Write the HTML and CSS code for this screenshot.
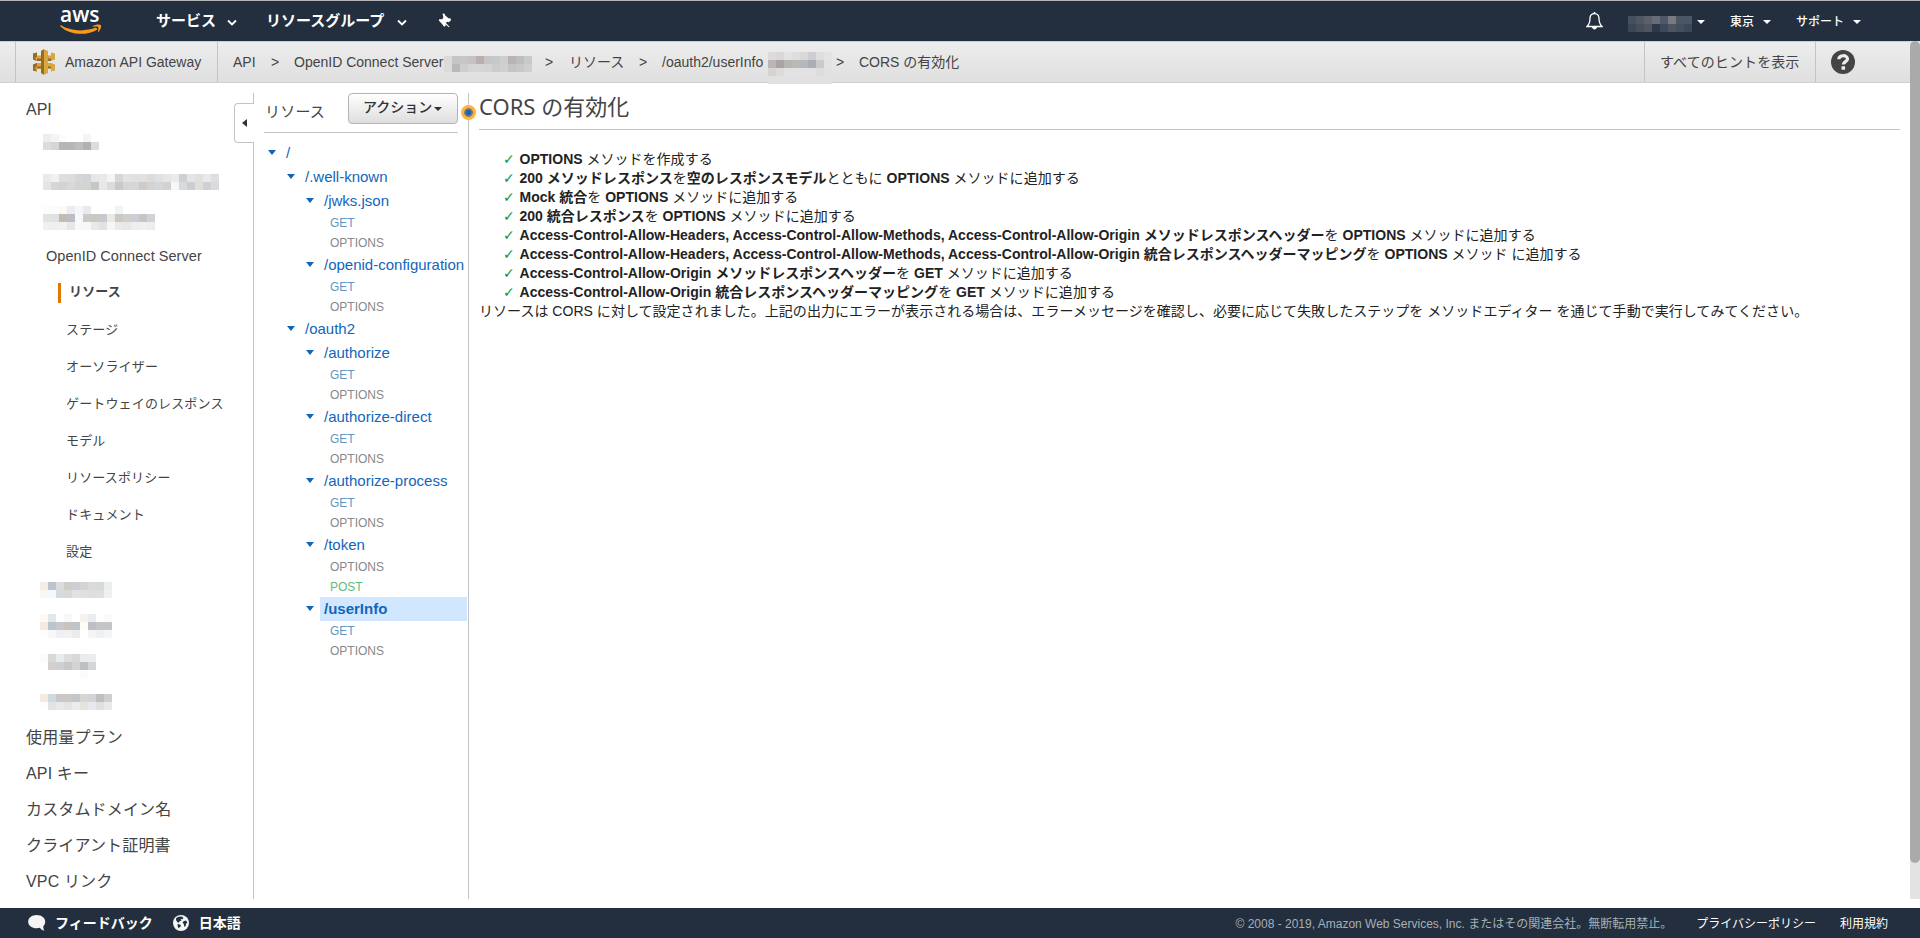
FILE: index.html
```html
<!DOCTYPE html>
<html lang="ja">
<head>
<meta charset="utf-8">
<title>API Gateway</title>
<link rel="stylesheet" href="styles.css">
</head>
<body>
<header class="nav">
  <div class="logo"><span class="logo-text">aws</span>
    <svg class="swoosh" width="42" height="11" viewBox="0 0 42 11"><path d="M.5 1C11 7.500 25 7.800 36 3.600L37.500 5.400C27 12 10 11.500.2 2.200z" fill="#f7981f"/><path d="M32.500 2.300C35 .2 39.500 0 40.800.9C41.800 2 40.500 5.800 38.300 8.200C37.500 8 38.900 4.200 38.300 3.200C37.700 2.400 35 2.600 32.500 2.700z" fill="#f7981f"/></svg>
  </div>
  <span class="menu services">サービス</span><svg class="chev" width="10" height="7" viewBox="0 0 10 7"><path d="M1 1.500L5 5.500L9 1.500" fill="none" stroke="#fff" stroke-width="1.800"/></svg>
  <span class="menu groups">リソースグループ</span><svg class="chev" width="10" height="7" viewBox="0 0 10 7"><path d="M1 1.500L5 5.500L9 1.500" fill="none" stroke="#fff" stroke-width="1.800"/></svg>
  <svg class="pin" width="14" height="15" viewBox="0 0 14 15"><path d="M4.500.8L6.300.6L7.300 2.500L10.500 5.200L12.700 5.500L13 7.200L10.800 9.200L9.200 8.800L7.300 10.300L7.600 13L6.200 13.800L3.600 10.500L.8 7.500L1.200 6.200L4.300 6.200L5.400 4.200zM7.500 9.500L11.500 13.800L10.800 14.300L6.500 10.500z" fill="#fff"/></svg>
  <div class="nav-right">
    <svg class="bell" width="17" height="18" viewBox="0 0 17 18"><path d="M8.500 1.600C5.500 1.600 4 3.800 4 6.500C4 10.500 3 12.500 1 14.500H16C14 12.500 13 10.500 13 6.500C13 3.800 11.500 1.600 8.500 1.600z" fill="none" stroke="#fff" stroke-width="1.300"/><path d="M6.500 15A2 2 0 0 0 10.500 15z" fill="#fff" stroke="#fff"/><path d="M8.500 0V2" stroke="#fff" stroke-width="1.500"/></svg>
    <div class="mosaic user" data-cells="454f60 4e5864 5d6066 666c7a 4d586b 777b80 4b5663 495665/3b4759 454f5b 4c5560 2d384b 3d4858 4b565e 434f5c 3c4757"></div>
    <i class="tri c1"></i><span class="small">東京</span><i class="tri c2"></i><span class="small">サポート</span><i class="tri c3"></i>
  </div>
</header>
<div class="crumbs">
  <div class="service">
    <svg class="gw" width="22" height="26" viewBox="0 0 22 26"><path d="M0 4.500L4 3.500V6.500H8V2L11 .3L15 2V6.500H18V3.500L22 4.500V10.500L18 12H15V14H18L22 15.500V21.500L18 22.500V19.500H15V24L11 25.800L8 24V19.500H4V22.500L0 21.500V15.500L4 14H8V12H4L0 10.500z" fill="#d9a741"/><path d="M8 2L11 .3V25.800L8 24zM0 4.500L4 3.500V7.500L2 9.500L4 12L0 10.500zM0 15.500L4 14V17L2 19L4 22.500L0 21.500zM4 9.500H8V12H4zM15 9.500H18V12H15zM4 17.500H8V19.500H4zM15 17.500H18V19.500H15z" fill="#946b27"/></svg>
    <span>Amazon API Gateway</span>
  </div>
  <div class="path">
    <span class="p-api">API</span><span class="gt g1">&gt;</span><span class="p-server">OpenID Connect Server</span>
    <div class="mosaic m-server" data-cells="dadada c5c5c5 c7c6c4 c4c3c3 b8afae c7c6c4 c5c9cc d0ceca b9b3b4 bdbdbe c7cacd/dcdcdc b9b9b9 cecece d5d5d5 d5d5d3 d3d5d5 cacdd0 d0d0d0 c5c3c4 c8c8c8 cdcfd1"></div>
    <span class="gt g2">&gt;</span><span class="p-res">リソース</span><span class="gt g3">&gt;</span><span class="p-info">/oauth2/userInfo</span>
    <div class="mosaic m-info" data-cells="dbdbdb d8d8d8 e1e2e2 dddddd dbd9d7 cdced1 dddee0 e3e3e3/b9b6b6 aaa2a3 b5b5b5 bdb8b1 b6b9bb abafb5 c9cacc e2e2e2/d5d4d2 dbdddb e2e2e2 e2e2e2 e2e2e2 e2e2e2 dddddf e1e1e1/e1e1e1 e1e1e1 e1e1e1 e1e1e1 e1e1e1 e1e1e1 e1e1e1 e1e1e1"></div>
    <span class="gt g4">&gt;</span><span class="p-cors">CORS の有効化</span>
  </div>
  <div class="hints">すべてのヒントを表示</div>
  <div class="help"><svg width="24" height="24" viewBox="0 0 24 24"><circle cx="12" cy="12" r="12" fill="#444"/><path d="M7.800 9.200C7.800 4.600 16.500 4.600 16.500 9C16.500 11.700 12.300 11.600 12.300 14.600" fill="none" stroke="#eee" stroke-width="3.200"/><rect x="10.500" y="16.300" width="3.600" height="3.400" fill="#eee"/></svg></div>
</div>
<main class="main">
  <nav class="side">
    <div class="top first">API</div>
    <div class="mosaic a1" data-cells="eeedec f3f5f8 fcfcfc ffffff ffffff f5f5f5 ffffff/dddcdc d6d5d3 b9b4b5 b7b6b7 bfbebe b3b1b0 dadbe3"></div>
    <div class="mosaic a2" data-cells="eaeae9 f2f1ef dedfdc dcdddd d5d6d7 d1d3d6 e4e7e7 ebe8e9 f6f4f3 d7d5d7 e3e3e3 e1e1e1 e3e1df dadddb e0e1e2 e7e6e5 ebebec cdd1d5 e3e5e6 e0e1df e8e9ea dddee2/e4e4e2 d8d6d5 d1d3d6 d8d8d7 d3d3cf d2d4d4 c5c6c7 e9e7e8 dcdbdb c9c8cb d6d6d6 d5d7d7 d0cac8 d1d3d7 d4d6d9 d3d2d1 f7f7f8 d9dada cccdd1 dededa d0cfd1 d9dae0"></div>
    <div class="mosaic a3" data-cells="fcfcfc fcfcfc f9f9f6 ececee f5f6fa e9eaeb ffffff ffffff fefefd f1f3f5 ffffff ffffff ffffff ffffff/e3e4e2 e1e2e0 c3bbb2 bbbec8 f6f8fc cdc9c7 cac8c5 c6cacd e9e9e8 cdc8c6 cfcfcb cbced4 c6c6c8 d1d2d7/f0f0ef edeff1 f1f1ef e6e6eb f7f8fa f8f8f8 e9e9e6 dfe2e7 f6f6f5 eaeae9 e8e7e5 efedee eff0f1 ecedef"></div>
    <div class="api">OpenID Connect Server</div>
    <div class="sub active">リソース</div>
    <div class="sub">ステージ</div>
    <div class="sub">オーソライザー</div>
    <div class="sub">ゲートウェイのレスポンス</div>
    <div class="sub">モデル</div>
    <div class="sub">リソースポリシー</div>
    <div class="sub">ドキュメント</div>
    <div class="sub">設定</div>
    <div class="mosaic b1" data-cells="f5eee7 bbc3ce dcdcdc cfcdca cdcfd5 d5d4d4 dadadb d8d9da eceded/faf6f1 f4f9ff d9dadc d9d8d6 e1e2e6 dfe0e1 dededd dedfe2 eff1f1"></div>
    <div class="mosaic b2" data-cells="fff9f6 e4e7e8 ffffff f8f8f9 ffffff f4f3f1 ebecf0 ffffff fafafa/f4eae4 b9c4ce c7c8c9 c9c2bf bfc4c9 fffcf5 bebec7 c4c5c6 c4c5c6/fdfdfc f8f8f9 eff0f3 f1f1f3 ececee fffffd f5f5f7 f0f0f1 f3f5f7"></div>
    <div class="mosaic b3" data-cells="fbfbfa d7d8d8 e9ecec dcdddd d8d8d7 ebebec ebecee/ffffff d5d0ce cdcfd2 c8c8c8 d4d3d2 bcc1c3 d3d5d7/ffffff ffffff ffffff ffffff ffffff fbfbfb ffffff"></div>
    <div class="mosaic b4" data-cells="f5ebe1 cfdadf c9c7ca cbc8c3 c4c6ca d6d6d6 d3d4d8 bfbfc0 cfcfd1/fefdfc e1e3e5 e8e8e9 e5e4e3 eaeceb e3e4de e8e9ef e1dfdf e7e9ea"></div>
    <div class="top plan">使用量プラン</div>
    <div class="top">API キー</div>
    <div class="top">カスタムドメイン名</div>
    <div class="top">クライアント証明書</div>
    <div class="top">VPC リンク</div>
  </nav>
  <div class="rail"><div class="rail-top"></div><div class="collapse"><i></i></div><div class="rail-rest"></div></div>
  <section class="tree">
    <div class="tree-head"><span>リソース</span><div class="button">アクション<i></i></div></div>
    <div class="rows">
      <div class="res l1"><i></i><span>/</span></div>
      <div class="res l2"><i></i><span>/.well-known</span></div>
      <div class="res l3"><i></i><span>/jwks.json</span></div>
      <div class="m get">GET</div><div class="m">OPTIONS</div>
      <div class="res l3"><i></i><span>/openid-configuration</span></div>
      <div class="m get">GET</div><div class="m">OPTIONS</div>
      <div class="res l2"><i></i><span>/oauth2</span></div>
      <div class="res l3"><i></i><span>/authorize</span></div>
      <div class="m get">GET</div><div class="m">OPTIONS</div>
      <div class="res l3"><i></i><span>/authorize-direct</span></div>
      <div class="m get">GET</div><div class="m">OPTIONS</div>
      <div class="res l3"><i></i><span>/authorize-process</span></div>
      <div class="m get">GET</div><div class="m">OPTIONS</div>
      <div class="res l3"><i></i><span>/token</span></div>
      <div class="m">OPTIONS</div><div class="m post">POST</div>
      <div class="res l3 selected"><i></i><span>/userInfo</span></div>
      <div class="m get">GET</div><div class="m">OPTIONS</div>
    </div>
    <div class="handle"></div>
  </section>
  <section class="content">
    <h1>CORS の有効化</h1>
    <ul>
      <li><b>OPTIONS</b> メソッドを作成する</li>
      <li><b>200 メソッドレスポンス</b>を<b>空のレスポンスモデル</b>とともに <b>OPTIONS</b> メソッドに追加する</li>
      <li><b>Mock 統合</b>を <b>OPTIONS</b> メソッドに追加する</li>
      <li><b>200 統合レスポンス</b>を <b>OPTIONS</b> メソッドに追加する</li>
      <li><b>Access-Control-Allow-Headers, Access-Control-Allow-Methods, Access-Control-Allow-Origin メソッドレスポンスヘッダー</b>を <b>OPTIONS</b> メソッドに追加する</li>
      <li><b>Access-Control-Allow-Headers, Access-Control-Allow-Methods, Access-Control-Allow-Origin 統合レスポンスヘッダーマッピング</b>を <b>OPTIONS</b> メソッド に追加する</li>
      <li><b>Access-Control-Allow-Origin メソッドレスポンスヘッダー</b>を <b>GET</b> メソッドに追加する</li>
      <li><b>Access-Control-Allow-Origin 統合レスポンスヘッダーマッピング</b>を <b>GET</b> メソッドに追加する</li>
    </ul>
    <p>リソースは CORS に対して設定されました。上記の出力にエラーが表示される場合は、エラーメッセージを確認し、必要に応じて失敗したステップを メソッドエディター を通じて手動で実行してみてください。</p>
  </section>
  <div class="scroll"><div class="thumb"></div></div>
</main>
<footer class="foot">
  <svg class="bubble" width="18" height="16" viewBox="0 0 18 16"><path d="M8.700 0C4 0 .2 2.800.2 6.700S4 13.200 8.700 13.200C10 13.200 11 13.100 12 12.800C13 14.500 14.500 15.400 16.300 15.700C15.600 14.500 15.200 13 15.200 11.200C16.600 10 17.200 8.500 17.200 6.700C17.200 2.800 13.400 0 8.700 0z" fill="#f5f5f5"/></svg>
  <span class="fb">フィードバック</span>
  <svg class="globe" width="16" height="16" viewBox="0 0 16 16"><circle cx="8" cy="8" r="8" fill="#f5f5f5"/><path d="M3 3.200L5.500 1.800L8.500 1.600L10.500 2.800L9.500 4.200L7.500 4L8.500 5.500L6.500 6.300L6 7.800L4.500 7.200L3.200 5.500zM10.500 6.200L13 5.500L14.300 7.500L13 9L12.500 11.500L11.200 11.500L10.800 9L9.600 7.800zM4.500 9L7 9.600L8.200 11L6.500 12.200L6 13.500L4.800 12z" fill="#232f3e"/></svg>
  <span class="fb">日本語</span>
  <span class="copy">© 2008 - 2019, Amazon Web Services, Inc. またはその関連会社。無断転用禁止。</span>
  <span class="link">プライバシーポリシー</span>
  <span class="link">利用規約</span>
</footer>
<script src="mosaic.js"></script>
</body>
</html>
```
FILE: styles.css
```css
* { box-sizing: border-box; }
body { margin: 0; width: 1920px; height: 938px; overflow: hidden; display: flex; flex-direction: column; background: #fff; color: #444; font-family: "Liberation Sans", "Noto Sans CJK JP", sans-serif; font-size: 14px; }
svg, i { display: block; flex: none; }
span, h1, p, li, .top, .sub, .api { white-space: nowrap; }

.mosaic { display: grid; grid-auto-rows: 8px; grid-template-columns: repeat(var(--cols), 8px); flex: none; }

.nav { height: 41px; flex: none; background: #232f3e; border-top: 1px solid #b4b4b4; display: flex; align-items: center; color: #fff; }
.logo { width: 42px; height: 40px; margin-left: 60px; padding-top: 4px; flex: none; }
.logo-text { display: block; height: 19px; font: 600 21px/19px "Open Sans", sans-serif; }
.menu { font-weight: bold; font-size: 15px; line-height: 32px; padding-bottom: 1px; }
.services { margin-left: 54px; width: 71px; }
.groups { margin-left: 29px; width: 131px; }
.chev { margin-top: 3px; }
.pin { margin-left: 31px; margin-top: -1px; }
.nav-right { margin-left: auto; display: flex; align-items: center; height: 40px; width: 334px; }
.bell { margin-right: 25px; }
.user { margin-top: 5px; }
.tri { border: 4px solid transparent; border-top-color: #fff; border-bottom: 0; margin-top: 2px; }
.small { font-size: 12px; font-weight: 500; color: #fff; padding-bottom: 1px; }
.c1 { margin-left: 5px; margin-right: 25px; }
.c2 { margin-left: 9px; margin-right: 25px; }
.c3 { margin-left: 9px; }

.crumbs { height: 42px; flex: none; display: flex; background: linear-gradient(#ededed, #dfdfdf); border-bottom: 1px solid #d0d0d0; border-top: 1px solid #ccc; line-height: 41px; }
.service { margin-left: 15px; width: 203px; border-left: 1px solid #c4c4c4; border-right: 1px solid #c4c4c4; display: flex; padding-left: 17px; }
.gw { margin: 7px 10px 0 0; }
.path { display: flex; padding-left: 15px; }
.p-api { width: 38px; }
.gt { width: 23px; }
.p-server { width: 150px; }
.m-server { margin-top: 14px; }
.g2 { margin-left: 13px; width: 24px; }
.p-res { width: 70px; }
.g3 { width: 23px; }
.p-info { width: 106px; }
.m-info { margin-top: 10px; height: 32px; }
.g4 { margin-left: 4px; width: 23px; }
.hints { margin-left: auto; width: 172px; border-left: 1px solid #c4c4c4; border-right: 1px solid #c4c4c4; padding-left: 15px; letter-spacing: .1px; }
.help { width: 104px; padding: 8px 0 0 15px; }

.main { flex: 1; min-height: 0; display: flex; }
.side { width: 234px; flex: none; padding-top: 8px; }
.top { height: 36px; line-height: 36px; padding-left: 26px; font-size: 16px; letter-spacing: .15px; }
.first { line-height: 38px; letter-spacing: 0; }
.sub { height: 37px; line-height: 37px; margin-left: 58px; padding-left: 8px; font-size: 13px; letter-spacing: .15px; }
.sub.active { font-weight: bold; height: 20px; line-height: 18px; margin-top: 9px; margin-bottom: 8px; border-left: 3px solid #e07700; padding-left: 8px; }
.api { height: 37px; line-height: 39px; padding-left: 46px; font-size: 14.5px; letter-spacing: .05px; margin-top: 7px; }
.a1 { margin: 7px 0 0 43px; }
.a2 { margin: 24px 0 0 43px; }
.a3 { margin: 16px 0 0 43px; }
.b1 { margin: 12px 0 0 40px; }
.b2 { margin: 16px 0 0 40px; }
.b3 { margin: 16px 0 0 40px; }
.b4 { margin: 16px 0 0 40px; }
.plan { margin-top: 10px; }

.rail { width: 20px; flex: none; height: 806px; margin-top: 10px; display: flex; flex-direction: column; }
.rail-top { height: 10px; border-right: 1px solid #c4c4c4; }
.collapse { height: 40px; border: 1px solid #c4c4c4; border-right: 0; border-radius: 4px 0 0 4px; padding: 15px 0 0 7px; }
.collapse i { width: 0; border: 4px solid transparent; border-right: 5px solid #333; border-left: 0; }
.rail-rest { flex: 1; border-right: 1px solid #c4c4c4; }

.tree { width: 215px; flex: none; height: 806px; margin-top: 10px; border-right: 1px solid #c4c4c4; padding-left: 10px; position: relative; }
.tree-head { width: 194px; height: 40px; border-bottom: 1px solid #c4c4c4; display: flex; justify-content: space-between; font-size: 15px; line-height: 38px; padding-left: 1px; }
.tree-head span { letter-spacing: .2px; }
.button { width: 110px; height: 31px; border: 1px solid #b5b5b5; border-radius: 4px; background: linear-gradient(#fff, #dedede); display: flex; align-items: center; padding-left: 14px; font-size: 14px; font-weight: 500; line-height: 29px; padding-bottom: 2px; color: #333; }
.button i { border: 4px solid transparent; border-top-color: #333; border-bottom: 0; margin-left: 2px; margin-top: 3px; }
.rows { padding-top: 8px; }
.res { height: 24px; line-height: 24px; display: flex; color: #1166bb; font-size: 15px; }
.res i { border: 4px solid transparent; border-top: 5px solid #1166bb; border-bottom: 0; margin: 9px 6px 0 0; }
.res span { padding-left: 4px; }
.l1 { padding-left: 4px; }
.l2 { padding-left: 23px; }
.l3 { padding-left: 42px; }
.selected span { flex: 1; background: #d1e7ff; margin-right: 1px; font-weight: bold; }
.m { height: 20px; line-height: 20px; padding-left: 66px; font-size: 12px; color: #888; }
.get { color: #6294c4; }
.post { color: #5fbb80; }
.handle { position: absolute; left: 207px; top: 12px; width: 15px; height: 15px; border-radius: 50%; background: radial-gradient(circle, #1166bb 2.200px, #7d7b66 3.200px, #7d7b66 4px, #ffb03f 4.700px); }

.content { flex: 1; padding: 10px 10px 0 10px; color: #222; }
h1 { margin: 0; font: 400 22px/26px "Noto Sans", "Noto Sans CJK JP", sans-serif; height: 37px; border-bottom: 1px solid #c4c4c4; color: #444; }
ul { list-style: none; margin: 20px 0 0; padding: 0 0 0 24px; }
li { height: 19px; line-height: 19px; display: block; letter-spacing: .015px; }
li::before { content: "✓"; display: inline-block; width: 16.500px; color: #14953b; font: bold 14px/15px "DejaVu Sans", sans-serif; }
p { margin: 0; line-height: 19px; letter-spacing: .03px; }
.scroll { width: 10px; height: 858px; margin-top: -42px; flex: none; background: #e3e3e3; }
.thumb { height: 822px; border-radius: 5px; background: #aaa; }

.foot { height: 30px; flex: none; background: #232f3e; color: #fff; display: flex; align-items: center; padding-left: 28px; }
.fb { font-weight: bold; line-height: 26px; padding-bottom: 1px; }
.bubble { margin-right: 9px; }
.globe { margin: 0 10px 0 20px; }
.copy { margin-left: auto; color: #a5b0b5; font-size: 12px; padding-bottom: 2px; }
.link { font-size: 12px; margin-left: 24px; padding-bottom: 2px; }
.link:last-child { margin-right: 32px; }
```
FILE: mosaic.js
```js
// Fills each masked label with its grid of coloured cells.
document.querySelectorAll('.mosaic').forEach(function (box) {
  var rows = box.dataset.cells.split('/').map(function (r) { return r.split(' '); });
  box.style.setProperty('--cols', rows[0].length);
  rows.forEach(function (row) {
    row.forEach(function (color) {
      var cell = document.createElement('i');
      cell.style.background = '#' + color;
      box.appendChild(cell);
    });
  });
});
```
